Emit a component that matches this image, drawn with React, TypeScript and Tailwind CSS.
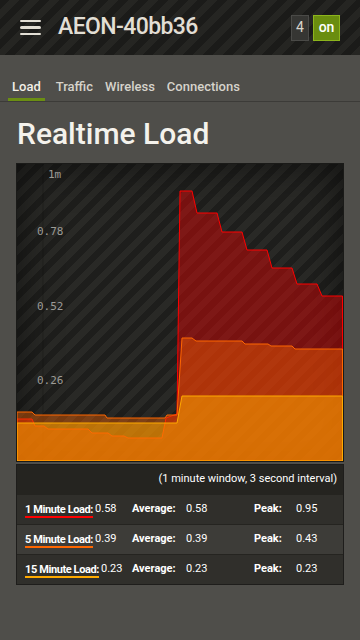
import React from "react";

const rows = [
  { label: "1 Minute Load:", value: "0.58", avg: "0.58", peak: "0.95", line: "border-[#ff0000]" },
  { label: "5 Minute Load:", value: "0.39", avg: "0.39", peak: "0.43", line: "border-[#ff6600]" },
  { label: "15 Minute Load:", value: "0.23", avg: "0.23", peak: "0.23", line: "border-[#ffaa00]" },
];

function LoadChart() {
  return (
    <svg viewBox="17 164 326 297" width="326" height="297" className="block">
      <line x1="43" y1="164" x2="43" y2="461" stroke="rgba(0,0,0,0.18)" strokeWidth="1" />
      <path
        d="M17,419 L32,419 L35,426 L44,426 L48,429 L88,429 L92,433 L108,433 L112,436 L124,436 L128,438 L162,438 L166,418 L177,414 L180,191 L192,191 L197,213 L217,213 L222,232 L242,232 L247,250 L267,250 L272,268 L292,268 L297,284 L317,284 L322,296 L342.5,296 L342.5,461 L17,461 Z"
        fill="#ff0000"
        fillOpacity="0.4"
        stroke="#ff0000"
        strokeWidth="1"
      />
      <path
        d="M17,412 L32,412 L35,415 L105,415 L107,418 L165,418 L167,415 L177,415 L182,338 L192,338 L196,341 L242,341 L245,344 L268,344 L271,346 L292,346 L295,349 L342.5,349 L342.5,461 L17,461 Z"
        fill="#ff6600"
        fillOpacity="0.4"
        stroke="#ff6600"
        strokeWidth="1"
      />
      <path
        d="M17,423 L177,423 L182,396 L342.5,396 L342.5,461 L17,461 Z"
        fill="#ffaa00"
        fillOpacity="0.5"
        stroke="#ffaa00"
        strokeWidth="1"
      />
      <g fill="#9c9b96" fontSize="11" fontFamily="'DejaVu Sans Mono', monospace">
        <text x="48" y="178">1m</text>
        <text x="37" y="235">0.78</text>
        <text x="37" y="310">0.52</text>
        <text x="37" y="384">0.26</text>
      </g>
    </svg>
  );
}

export default function App() {
  return (
    <div className="min-h-[640px] w-[360px] bg-[#4f4e4a] font-['Roboto',sans-serif]">
      <header className="flex h-[55px] items-center bg-[repeating-linear-gradient(135deg,#1b1b19_0px,#1b1b19_7px,#252522_7px,#252522_14px)] pl-5 pr-5">
        <div className="flex w-[21px] flex-col gap-[4px]">
          <span className="h-[2.5px] rounded-sm bg-[#e2ded4]" />
          <span className="h-[2.5px] rounded-sm bg-[#e2ded4]" />
          <span className="h-[2.5px] rounded-sm bg-[#e2ded4]" />
        </div>
        <h1 className="ml-[17px] text-[23px] font-medium tracking-[-0.6px] text-[#e2ded4]">AEON-40bb36</h1>
        <div className="ml-auto flex gap-[4px]">
          <span className="flex h-[26px] w-[18px] items-center justify-center border border-[#4a4a47] bg-[#363633] text-[14px] text-[#d8d5cc]">
            4
          </span>
          <span className="flex h-[26px] w-[27px] items-center justify-center border border-[#8db51c] bg-[#6a8d0f] text-[14px] font-medium text-white">
            on
          </span>
        </div>
      </header>

      <nav className="mt-[22px] flex border-b border-[#3c3b38] pl-2 text-[13px] font-medium">
        <span className="border-b-[3px] border-[#6b8e13] px-1 pb-[1px] text-[#f2efe7]">Load</span>
        <span className="ml-[7px] px-1 text-[#d6d3cb]">Traffic</span>
        <span className="ml-[4px] px-1 text-[#d6d3cb]">Wireless</span>
        <span className="ml-[4px] px-1 text-[#d6d3cb]">Connections</span>
      </nav>

      <h2 className="mt-[12px] pl-[17px] text-[30px] font-medium leading-[40px] text-[#f4f2ec]">Realtime Load</h2>

      <div className="mx-4 mt-[9px] border border-[#1a1a18] bg-[repeating-linear-gradient(135deg,#1e1e1c_0px,#1e1e1c_6.5px,#292926_6.5px,#292926_13px)] shadow-[inset_0_0_40px_rgba(0,0,0,0.55)]">
        <LoadChart />
      </div>

      <div className="mx-4 mt-[2px] border border-[#1e1d1b] text-[11px] text-white">
        <div className="flex h-[29px] items-center justify-end bg-[#252420] pr-[6px]">
          (1 minute window, 3 second interval)
        </div>
        {rows.map((r, i) => (
          <div
            key={r.label}
            className={`flex h-[30px] items-center border-t border-[#252420] ${i === 1 ? "bg-[#3d3c38]" : "bg-[#302f2b]"}`}
          >
            <div className="flex w-[115px] shrink-0 items-center pl-2">
              <span className={`whitespace-nowrap border-b-2 pt-[3px] font-bold leading-[13px] tracking-[-0.4px] ${r.line}`}>
                {r.label}
              </span>
              <span className="ml-[2px]">{r.value}</span>
            </div>
            <div className="w-[54px] shrink-0 font-bold">Average:</div>
            <div className="w-[68px] shrink-0">{r.avg}</div>
            <div className="w-[42px] shrink-0 font-bold">Peak:</div>
            <div>{r.peak}</div>
          </div>
        ))}
      </div>
    </div>
  );
}
